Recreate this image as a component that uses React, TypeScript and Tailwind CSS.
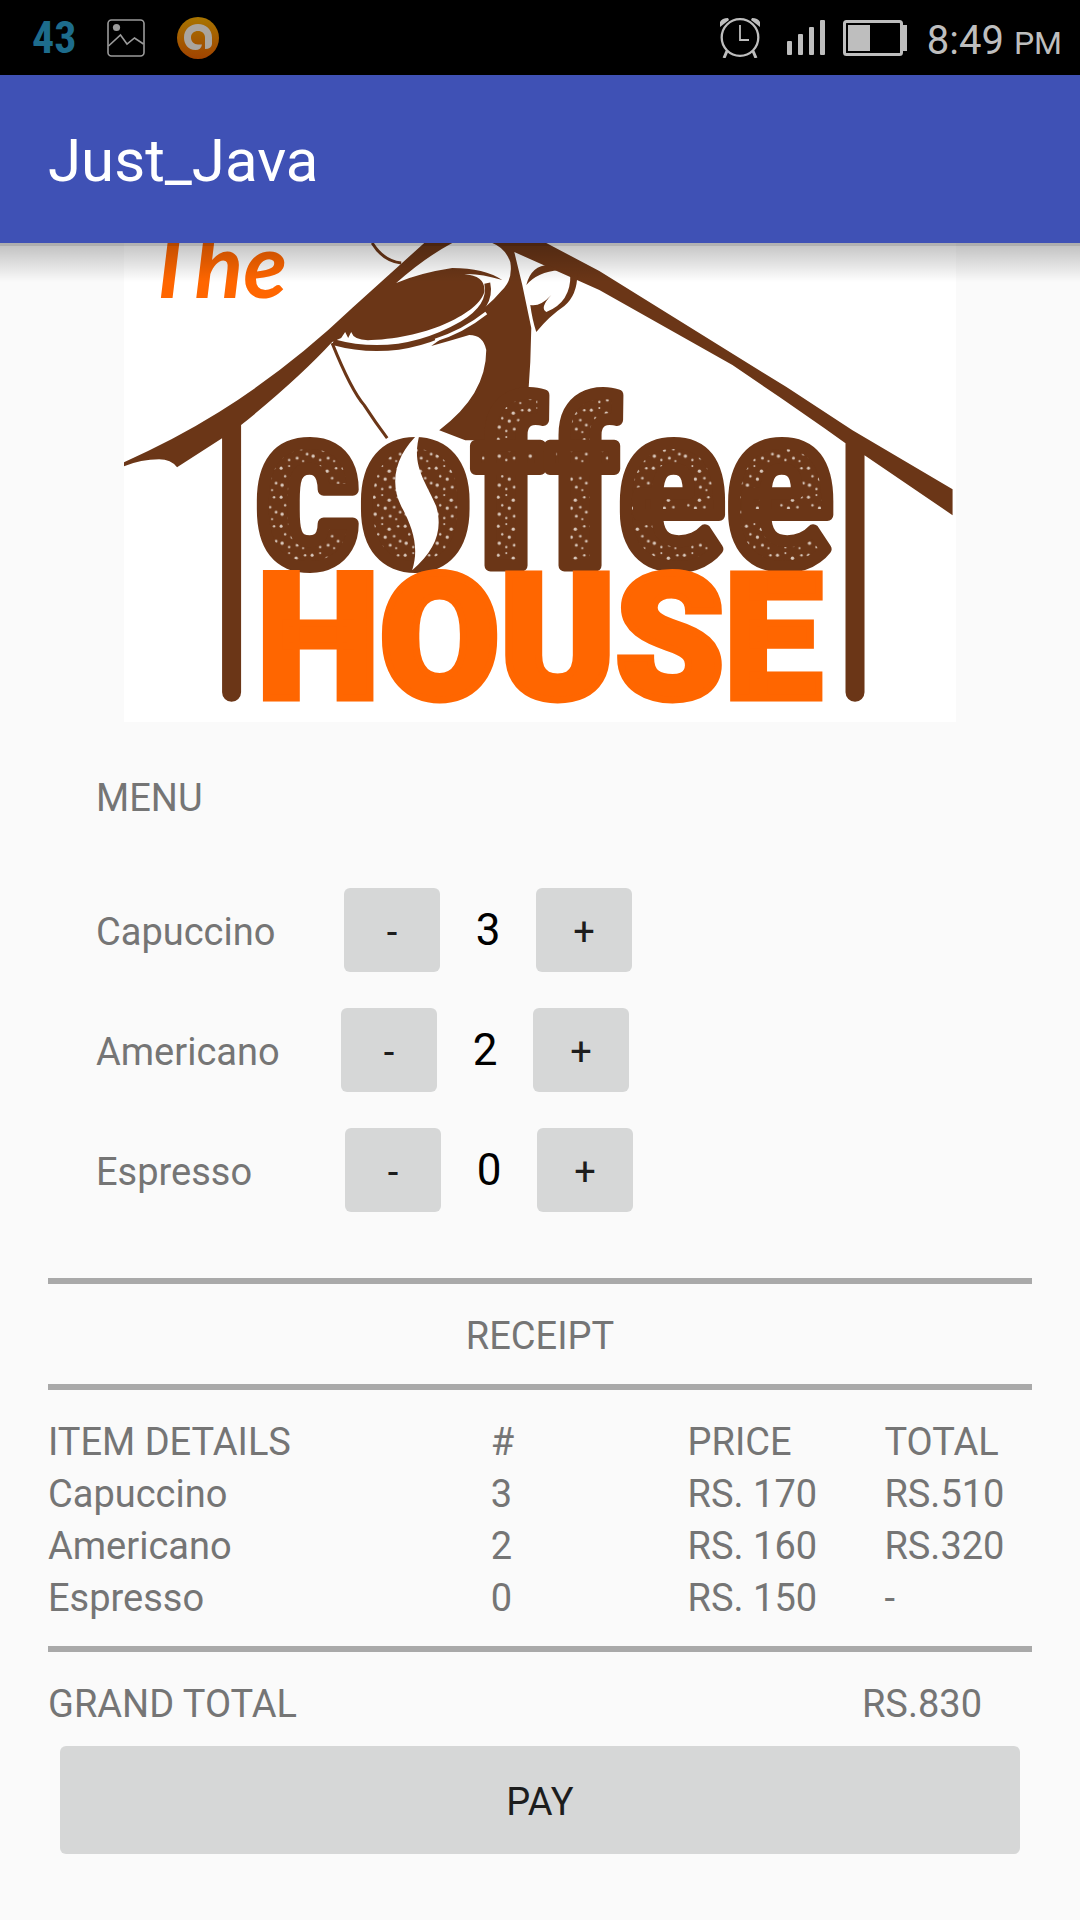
import { useState } from "react";

type Drink = { name: string; price: number; labelWidth: string };

const DRINKS: Drink[] = [
  { name: "Capuccino", price: 170, labelWidth: "w-[248px]" },
  { name: "Americano", price: 160, labelWidth: "w-[245px]" },
  { name: "Espresso", price: 150, labelWidth: "w-[249px]" },
];

const BROWN = "#6b3617";
const ORANGE = "#ff6600";

function PictureIcon() {
  return (
    <svg viewBox="0 0 38 38" className="size-[38px]" fill="none" stroke="#9b9b9b" strokeWidth="1.6" aria-hidden="true">
      <rect x="1" y="1" width="36" height="36" rx="3.5" />
      <circle cx="9.500" cy="8.500" r="3.600" fill="#9b9b9b" stroke="none" />
      <path d="M1.500 27 13.500 16 20 25 27.500 19 36.500 25" />
    </svg>
  );
}

function AvastIcon() {
  return (
    <svg viewBox="0 0 42 42" className="size-[42px]" aria-hidden="true">
      <defs>
        <linearGradient id="badge" x1="0" y1="0" x2="0" y2="1">
          <stop offset="0" stopColor="#a87500" />
          <stop offset="1" stopColor="#a04300" />
        </linearGradient>
      </defs>
      <circle cx="21" cy="21" r="21" fill="url(#badge)" />
      <path
        d="M25 27.500Q24 33 18.500 33C11 33 7 27 7 20.500C7 12.500 13 7 21 7S35 12.500 35 20.500V27Q34.500 32 28 32V20.500C28 16.500 25 14 21 14S14 16.500 14 20.500S17 27.500 21 27.500Z"
        fill="#aaa59f"
      />
    </svg>
  );
}

function AlarmIcon() {
  return (
    <svg viewBox="0 0 40 40" className="size-10" fill="none" stroke="#bebebe" strokeWidth="2.300" aria-hidden="true">
      <circle cx="20" cy="19.500" r="18.300" />
      <path d="M20 7V22H29" strokeWidth="1.800" />
      <path d="M0 9V4Q2 0 8 0L9 2ZM40 9V4Q38 0 32 0L31 2Z" fill="#bebebe" stroke="none" />
      <path d="M7 33 4 40M33 33 36 40" strokeWidth="3" />
    </svg>
  );
}

function SignalIcon() {
  return (
    <svg viewBox="0 0 38 36" className="h-9 w-[38px]" fill="#bebebe" aria-hidden="true">
      <rect x="0" y="21" width="5" height="14" rx="1" />
      <rect x="11" y="14" width="5" height="21" rx="1" />
      <rect x="22" y="7" width="5" height="28" rx="1" />
      <rect x="33" y="0" width="5" height="35" rx="1" />
    </svg>
  );
}

function BatteryIcon() {
  return (
    <svg viewBox="0 0 64 36" className="h-9 w-16" fill="#bebebe" aria-hidden="true">
      <rect x="1.500" y="1.500" width="57" height="33" rx="2" fill="none" stroke="#bebebe" strokeWidth="3" />
      <rect x="5" y="5" width="22" height="26" />
      <rect x="59" y="5" width="5" height="26" />
    </svg>
  );
}

function StatusBar() {
  return (
    <div className="flex h-[75px] items-center justify-between bg-black pr-[18px] pl-8">
      <div className="flex items-center">
        <span className="w-[75px] font-['Liberation_Sans_Narrow','Roboto_Condensed','Roboto',sans-serif] text-[44px] leading-none font-bold text-[#1d6c8c]">
          43
        </span>
        <PictureIcon />
        <span className="w-8" />
        <AvastIcon />
      </div>
      <div className="flex items-center text-[#bebebe]">
        <AlarmIcon />
        <span className="w-[27px]" />
        <SignalIcon />
        <span className="w-[18px]" />
        <BatteryIcon />
        <span className="ml-5 pt-2 text-[40px]">
          8:49 <span className="text-[32px]">PM</span>
        </span>
      </div>
    </div>
  );
}

function CoffeeHouseLogo() {
  return (
    <svg viewBox="125 243 831 479" className="block w-full bg-white" role="img" aria-label="The Coffee House">
      <defs>
        <pattern id="grain" width="31" height="29" patternUnits="userSpaceOnUse">
          <rect width="31" height="29" fill={BROWN} />
          <g fill="#d9c8bc">
            <circle cx="3" cy="4" r="1.500" />
            <circle cx="11" cy="2" r="1" />
            <circle cx="18" cy="7" r="1.700" />
            <circle cx="27" cy="4" r="1.200" />
            <circle cx="7" cy="12" r="1.200" />
            <circle cx="14" cy="15" r="1.600" />
            <circle cx="23" cy="14" r="1.300" />
            <circle cx="29" cy="19" r="1.400" />
            <circle cx="4" cy="21" r="1.700" />
            <circle cx="11" cy="25" r="1.200" />
            <circle cx="19" cy="23" r="1.500" />
            <circle cx="25" cy="26" r="1" />
          </g>
        </pattern>
      </defs>

      <text x="146" y="298" fontFamily="Lato, sans-serif" fontSize="90" fontWeight="700" fontStyle="italic" fill={ORANGE}>
        The
      </text>

      <g fill={BROWN}>
        <path d="M125 462Q175 440 220 412Q290 368 353 308L425 243H453Q425 258 397 283Q420 273 453 268Q485 268 503 280Q480 273 465 274Q487 276 485 292C480 312 430 338 372 340Q355 341 352 332L349 338L346 332L342 338L333 342Q300 378 242 425V692A9 9 0 0 1 223 692V438L178 467Q172 459 160 459Q142 459 125 466Z" />
        <path d="M493 243H547L600 271L787 387L853 430L953 489V515L865 455V692A9 9 0 0 1 846 692V443L825 428L780 397L733 365L600 290L515 252L523 285L532 328L531 362L526 440H466L440 430Q487 395 487 350Q484 335 470 335Q450 341 432 346L465 322Q488 308 502 291Q514 280 511 262Q506 248 493 243Z" />
        <path d="M527 285Q532 265 550 265L560 270Q538 272 527 285ZM571 274H578Q578 295 565 306Q550 316 537 332Q533 320 531 305Q541 307 552 295Q540 308 547 312Q572 302 571 274Z" />
      </g>
      <g fill="none" stroke={BROWN}>
        <path d="M373 243Q384 261 402 263" strokeWidth="3" />
        <path d="M333 343Q352 390 365 405Q376 422 388 438" strokeWidth="3" />
        <path d="M334 342Q400 360 463 324Q493 306 488 283" strokeWidth="6" />
        <path d="M436 340Q463 332 487 313" stroke="#fff" strokeWidth="3" />
      </g>

      <text
        x="256"
        y="565"
        fontFamily="'Liberation Sans Narrow', 'Roboto Condensed', Roboto, sans-serif"
        fontSize="226"
        fontWeight="700"
        fill="url(#grain)"
        stroke={BROWN}
        strokeWidth="12"
        strokeLinejoin="round"
      >
        coffee
      </text>
      <ellipse cx="415" cy="501" rx="30" ry="50" fill="url(#grain)" />
      <path
        d="M421 432C398 452 389 480 402 506C414 528 420 548 413 570C436 550 444 530 437 506C426 480 411 465 421 432Z"
        fill="#fff"
      />

      <text
        x="258"
        y="698"
        fontFamily="Roboto, sans-serif"
        fontSize="174"
        fontWeight="900"
        fill={ORANGE}
        stroke={ORANGE}
        strokeWidth="7"
      >
        HOUSE
      </text>
    </svg>
  );
}

function StepButton({ label, sign, onClick }: { label: string; sign: string; onClick: () => void }) {
  return (
    <button
      type="button"
      aria-label={label}
      onClick={onClick}
      className="h-[84px] w-24 rounded-[6px] bg-[#d6d7d7] pt-1 text-[38px] text-[#1d1d1d]"
    >
      {sign}
    </button>
  );
}

export default function App() {
  const [counts, setCounts] = useState([3, 2, 0]);

  const change = (index: number, step: number) =>
    setCounts(counts.map((count, i) => (i === index ? Math.max(0, count + step) : count)));

  const total = DRINKS.reduce((sum, drink, i) => sum + drink.price * counts[i], 0);

  return (
    <div className="min-h-screen bg-[#fafafa] font-['Roboto',sans-serif] text-[38px] leading-[52px] text-[#757575]">
      <StatusBar />
      <header className="relative flex h-[168px] items-center bg-[#3f51b5] px-12">
        <h1 className="pt-1 text-[60px] leading-none text-white">Just_Java</h1>
        <div className="absolute inset-x-0 top-full h-[3px] bg-black/30" />
        <div className="absolute inset-x-0 top-full mt-[3px] h-9 bg-linear-to-b from-black/22 to-transparent" />
      </header>

      <main className="pb-16">
        <div className="mx-auto w-[77%]">
          <CoffeeHouseLogo />
        </div>

        <section className="px-24 pt-[50px]">
          <h2>MENU</h2>
          <ul className="mt-16 flex flex-col gap-9">
            {DRINKS.map((drink, i) => (
              <li key={drink.name} className="flex items-center">
                <span className={`${drink.labelWidth} pt-1`}>{drink.name}</span>
                <StepButton label={`Remove one ${drink.name}`} sign="-" onClick={() => change(i, -1)} />
                <span className="w-24 text-center text-[44px] text-black">{counts[i]}</span>
                <StepButton label={`Add one ${drink.name}`} sign="+" onClick={() => change(i, 1)} />
              </li>
            ))}
          </ul>
        </section>

        <section className="mx-12 mt-[66px]">
          <h2 className="border-y-6 border-[#a9a9a9] pt-[26px] pb-[22px] text-center">RECEIPT</h2>
          <div className="border-b-6 border-[#a9a9a9] pt-[26px] pb-[22px]">
            <table className="w-full table-fixed text-left">
              <thead>
                <tr>
                  <th className="w-[45%] font-normal">ITEM DETAILS</th>
                  <th className="w-[20%] font-normal">#</th>
                  <th className="w-[20%] font-normal">PRICE</th>
                  <th className="w-[15%] font-normal">TOTAL</th>
                </tr>
              </thead>
              <tbody>
                {DRINKS.map((drink, i) => (
                  <tr key={drink.name}>
                    <td>{drink.name}</td>
                    <td>{counts[i]}</td>
                    <td>RS. {drink.price}</td>
                    <td>{counts[i] > 0 ? `RS.${drink.price * counts[i]}` : "-"}</td>
                  </tr>
                ))}
              </tbody>
            </table>
          </div>
          <div className="flex justify-between pt-[26px] pr-[50px]">
            <span>GRAND TOTAL</span>
            <span>RS.{total}</span>
          </div>
          <div className="px-3 pt-4">
            <button type="button" className="h-[108px] w-full rounded-[6px] bg-[#d6d7d7] pt-1 text-[#1d1d1d]">
              PAY
            </button>
          </div>
        </section>
      </main>
    </div>
  );
}
